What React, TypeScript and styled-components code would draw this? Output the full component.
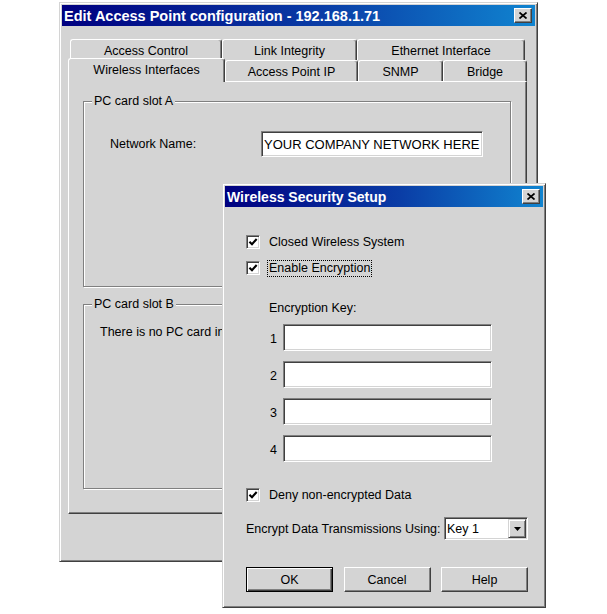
import React from "react";
import styled, { createGlobalStyle } from "styled-components";

const FACE = "#d4d4d4";
const SHADOW = "#808080";
const DARK = "#404040";

const GlobalStyle = createGlobalStyle`
  html, body {
    margin: 0;
    padding: 0;
    background: #fff;
  }
  body {
    font-family: "Liberation Sans", Arial, sans-serif;
    font-size: 12.5px;
    color: #000;
  }
  * {
    box-sizing: border-box;
  }
`;

const Desktop = styled.div`
  position: relative;
  width: 607px;
  height: 614px;
  overflow: hidden;
  background: #fff;
`;

const Window = styled.div<{
  $left: number;
  $top: number;
  $width: number;
  $height: number;
}>`
  position: absolute;
  left: ${(p) => p.$left}px;
  top: ${(p) => p.$top}px;
  width: ${(p) => p.$width}px;
  height: ${(p) => p.$height}px;
  display: flex;
  flex-direction: column;
  padding: 2px;
  background: ${FACE};
  border: 1px solid;
  border-color: ${FACE} ${DARK} ${DARK} ${FACE};
  box-shadow: inset 1px 1px #fff, inset -1px -1px ${SHADOW};
`;

const TitleBar = styled.div<{ $size: number }>`
  height: 21px;
  flex: none;
  display: flex;
  align-items: center;
  justify-content: space-between;
  padding: 0 3px 0 2px;
  background: linear-gradient(90deg, #000080 0%, #0a3da6 55%, #1084d0 100%);
  color: #fff;
  font-weight: bold;
  font-size: ${(p) => p.$size}px;
  white-space: nowrap;
`;

const CloseBox = styled.div`
  width: 18px;
  height: 15px;
  display: flex;
  align-items: center;
  justify-content: center;
  background: ${FACE};
  border: 1px solid;
  border-color: #fff ${DARK} ${DARK} #fff;
  box-shadow: inset -1px -1px ${SHADOW};
`;

const CloseButton = () => (
  <CloseBox>
    <svg width="8" height="7" viewBox="0 0 8 7">
      <path
        d="M0.5 0.5 L7.5 6.5 M7.5 0.5 L0.5 6.5"
        stroke="#000"
        strokeWidth="1.7"
        fill="none"
      />
    </svg>
  </CloseBox>
);

/* ---- main window ---- */

const MainBody = styled.div`
  padding: 13px 8px 0 6px;
  display: flex;
  flex-direction: column;
`;

const TabRow = styled.div<{ $indent: number }>`
  display: flex;
  align-items: flex-end;
  height: 21px;
  padding-left: ${(p) => p.$indent}px;
`;

const Tab = styled.div<{ $w: number; $active?: boolean }>`
  position: relative;
  z-index: ${(p) => (p.$active ? 2 : 1)};
  width: ${(p) => p.$w}px;
  height: ${(p) => (p.$active ? 24 : 21)}px;
  margin-bottom: ${(p) => (p.$active ? -1 : 0)}px;
  padding: ${(p) => (p.$active ? "0 0 2px" : "1px 0 0")};
  display: flex;
  align-items: center;
  justify-content: center;
  background: ${FACE};
  border-top: 1px solid #fff;
  border-left: 1px solid #fff;
  border-right: 1px solid ${DARK};
  box-shadow: inset -1px 0 ${SHADOW};
  border-radius: 3px 3px 0 0;
  white-space: nowrap;
`;

const TabPanel = styled.div`
  width: 459px;
  height: 433px;
  padding: 12px 15px 0 14px;
  background: ${FACE};
  border: 1px solid;
  border-color: #fff ${DARK} ${DARK} #fff;
  box-shadow: inset -1px -1px ${SHADOW};
  display: flex;
  flex-direction: column;
`;

const GroupBox = styled.fieldset<{ $h: number; $gap?: number }>`
  margin: ${(p) => p.$gap ?? 0}px 0 0 0;
  padding: 0;
  min-width: 0;
  width: 428px;
  height: ${(p) => p.$h}px;
  border: 1px solid ${SHADOW};
  box-shadow: inset 1px 1px #fff, 1px 1px #fff;
`;

const Legend = styled.legend`
  margin-left: 8px;
  padding: 0 2px;
  line-height: 14px;
  background: ${FACE};
`;

const FieldRow = styled.div`
  display: flex;
  align-items: center;
  margin: 23px 0 0 26px;
`;

const FieldLabel = styled.span`
  width: 151px;
`;

const Sunken = styled.div<{ $w: number; $h: number }>`
  width: ${(p) => p.$w}px;
  height: ${(p) => p.$h}px;
  background: #fff;
  border: 1px solid;
  border-color: ${SHADOW} #fff #fff ${SHADOW};
  box-shadow: inset 1px 1px ${DARK}, inset -1px -1px ${FACE};
  display: flex;
  align-items: center;
`;

const InputText = styled.span`
  padding-left: 2px;
  font-size: 13px;
  white-space: nowrap;
`;

const Note = styled.div`
  margin: 14px 0 0 16px;
  white-space: nowrap;
`;

/* ---- dialog ---- */

const DialogBody = styled.div`
  flex: 1;
  display: flex;
  flex-direction: column;
  padding: 26px 15px 0 21px;
`;

const CheckRow = styled.div<{ $gap?: number }>`
  display: flex;
  align-items: center;
  height: 18px;
  gap: 8px;
  margin-top: ${(p) => p.$gap ?? 0}px;
`;

const CheckBox = styled.div`
  width: 14px;
  height: 14px;
  flex: none;
  background: #fff;
  border: 1px solid;
  border-color: ${SHADOW} #fff #fff ${SHADOW};
  box-shadow: inset 1px 1px ${DARK}, inset -1px -1px ${FACE};
  display: flex;
  align-items: center;
  justify-content: center;
`;

const CheckLabel = styled.span<{ $focus?: boolean }>`
  padding: 0 1px;
  line-height: 15px;
  outline: ${(p) => (p.$focus ? "1px dotted #000" : "none")};
  white-space: nowrap;
`;

const Check = ({ label, focus, gap }: { label: string; focus?: boolean; gap?: number }) => (
  <CheckRow $gap={gap}>
    <CheckBox>
      <svg width="10" height="10" viewBox="0 0 9 9">
        <path d="M1.3 4.2 L3.6 6.5 L7.8 1.8" stroke="#000" strokeWidth="1.9" fill="none" />
      </svg>
    </CheckBox>
    <CheckLabel $focus={focus}>{label}</CheckLabel>
  </CheckRow>
);

const SubHeading = styled.div`
  margin: 23px 0 0 23px;
  line-height: 16px;
`;

const KeyList = styled.div`
  display: flex;
  flex-direction: column;
  gap: 10px;
  margin: 8px 0 0 24px;
`;

const KeyRow = styled.div`
  display: flex;
  align-items: center;
`;

const KeyNum = styled.span`
  width: 13px;
  padding-top: 2px;
`;

const SelectRow = styled.div`
  display: flex;
  align-items: center;
  justify-content: space-between;
  margin-top: 13px;
  white-space: nowrap;
`;

const SelectText = styled.span`
  flex: 1;
  padding-left: 2px;
`;

const DropButton = styled.div`
  width: 18px;
  height: 19px;
  margin-right: 1px;
  display: flex;
  align-items: center;
  justify-content: center;
  background: ${FACE};
  border: 1px solid;
  border-color: ${FACE} ${DARK} ${DARK} ${FACE};
  box-shadow: inset 1px 1px #fff, inset -1px -1px ${SHADOW};
`;

const ButtonRow = styled.div`
  display: flex;
  justify-content: space-between;
  margin-top: 27px;
`;

const Button = styled.div<{ $default?: boolean }>`
  width: 87px;
  height: 25px;
  display: flex;
  align-items: center;
  justify-content: center;
  background: ${FACE};
  border: 1px solid;
  border-color: ${(p) => (p.$default ? "#000" : `#fff ${DARK} ${DARK} #fff`)};
  box-shadow: ${(p) =>
    p.$default
      ? `inset 1px 1px #fff, inset -1px -1px ${DARK}, inset -2px -2px ${SHADOW}`
      : `inset -1px -1px ${SHADOW}`};
`;

export default function App() {
  return (
    <>
      <GlobalStyle />
      <Desktop>
        <Window $left={59} $top={2} $width={479} $height={560}>
          <TitleBar $size={14.5}>
            <span>Edit Access Point configuration - 192.168.1.71</span>
            <CloseButton />
          </TitleBar>
          <MainBody>
            <TabRow $indent={2}>
              <Tab $w={152}>Access Control</Tab>
              <Tab $w={135}>Link Integrity</Tab>
              <Tab $w={168}>Ethernet Interface</Tab>
            </TabRow>
            <TabRow $indent={0}>
              <Tab $w={157} $active>
                Wireless Interfaces
              </Tab>
              <Tab $w={133}>Access Point IP</Tab>
              <Tab $w={85}>SNMP</Tab>
              <Tab $w={84}>Bridge</Tab>
            </TabRow>
            <TabPanel>
              <GroupBox $h={193}>
                <Legend>PC card slot A</Legend>
                <FieldRow>
                  <FieldLabel>Network Name:</FieldLabel>
                  <Sunken $w={222} $h={26}>
                    <InputText>YOUR COMPANY NETWORK HERE</InputText>
                  </Sunken>
                </FieldRow>
              </GroupBox>
              <GroupBox $h={192} $gap={10}>
                <Legend>PC card slot B</Legend>
                <Note>There is no PC card in this slot.</Note>
              </GroupBox>
            </TabPanel>
          </MainBody>
        </Window>

        <Window $left={222} $top={183} $width={324} $height={425}>
          <TitleBar $size={14}>
            <span>Wireless Security Setup</span>
            <CloseButton />
          </TitleBar>
          <DialogBody>
            <Check label="Closed Wireless System" />
            <Check label="Enable Encryption" focus gap={8} />
            <SubHeading>Encryption Key:</SubHeading>
            <KeyList>
              {[1, 2, 3, 4].map((n) => (
                <KeyRow key={n}>
                  <KeyNum>{n}</KeyNum>
                  <Sunken $w={209} $h={27} />
                </KeyRow>
              ))}
            </KeyList>
            <Check label="Deny non-encrypted Data" gap={24} />
            <SelectRow>
              <span>Encrypt Data Transmissions Using:</span>
              <Sunken $w={84} $h={23}>
                <SelectText>Key 1</SelectText>
                <DropButton>
                  <svg width="7" height="4" viewBox="0 0 7 4">
                    <path d="M0 0 H7 L3.5 4 Z" fill="#000" />
                  </svg>
                </DropButton>
              </Sunken>
            </SelectRow>
            <ButtonRow>
              <Button $default>OK</Button>
              <Button>Cancel</Button>
              <Button>Help</Button>
            </ButtonRow>
          </DialogBody>
        </Window>
      </Desktop>
    </>
  );
}
